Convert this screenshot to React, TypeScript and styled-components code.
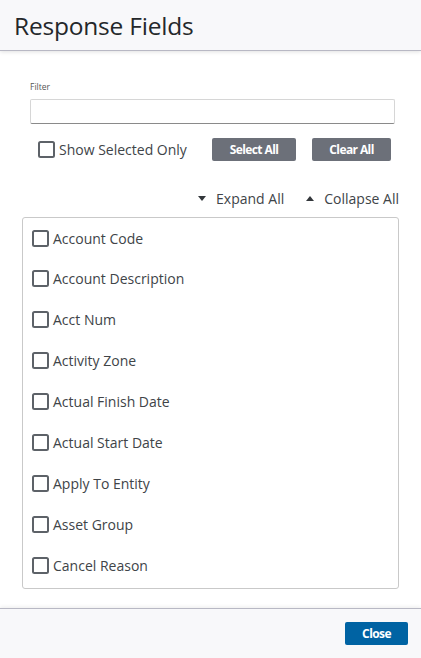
import React, { useState } from "react";
import styled, { createGlobalStyle } from "styled-components";

const GlobalStyle = createGlobalStyle`
  html, body {
    margin: 0;
    padding: 0;
    background: #ffffff;
    font-family: "Open Sans", "Liberation Sans", sans-serif;
    color: #333;
  }
`;

const fields = [
  "Account Code",
  "Account Description",
  "Acct Num",
  "Activity Zone",
  "Actual Finish Date",
  "Actual Start Date",
  "Apply To Entity",
  "Asset Group",
  "Cancel Reason",
];

const Dialog = styled.div`
  width: 421px;
  height: 658px;
  display: flex;
  flex-direction: column;
  overflow: hidden;
`;

const Header = styled.div`
  height: 50px;
  flex: none;
  background: #f8f8fa;
  border-bottom: 1px solid #b8b8c4;
  box-shadow: 0 1px 4px rgba(0, 0, 0, 0.12);
  display: flex;
  align-items: center;
  padding: 0 14px;
  position: relative;
  z-index: 1;

  h1 {
    margin: 0;
    font-size: 24.5px;
    font-weight: 400;
    color: #24272a;
    letter-spacing: -0.2px;
  }
`;

const Body = styled.div`
  flex: 1;
  background: #fff;
  padding: 30px 22px 0 22px;
  display: flex;
  flex-direction: column;
`;

const FilterGroup = styled.div`
  padding: 0 4px 0 8px;
  display: flex;
  flex-direction: column;

  label {
    font-size: 8.5px;
    color: #555;
    line-height: 12px;
    margin-bottom: 6px;
  }

  input {
    height: 25px;
    box-sizing: border-box;
    border: 1px solid #d6d6d6;
    border-bottom: 1px solid #8a8a8a;
    border-radius: 2px;
    outline: none;
    font-family: inherit;
    font-size: 13px;
    padding: 2px 6px;
  }
`;

const ControlRow = styled.div`
  display: flex;
  align-items: center;
  margin-top: 14px;
  padding-left: 16px;
`;

const CheckLabel = styled.label`
  display: flex;
  align-items: center;
  gap: 4px;
  font-size: 14px;
  color: #404448;
  cursor: pointer;
  user-select: none;
`;

const Box = styled.span<{ checked: boolean }>`
  width: 17px;
  height: 17px;
  box-sizing: border-box;
  border: 2px solid #5d6268;
  border-radius: 2.5px;
  background: ${(p) => (p.checked ? "#5d6268" : "#fff")};
  flex: none;
`;

const GreyButton = styled.button<{ width: number }>`
  width: ${(p) => p.width}px;
  height: 23px;
  border: none;
  border-radius: 2px;
  background: #6c7079;
  color: #fff;
  font-family: inherit;
  font-size: 12px;
  font-weight: 700;
  letter-spacing: -0.6px;
  cursor: pointer;
`;

const ShowSelected = styled.div`
  width: 174px;
`;

const ButtonGap = styled.div`
  width: 16px;
`;

const ToggleRow = styled.div`
  display: flex;
  justify-content: flex-end;
  gap: 22px;
  margin-top: 28px;
  font-size: 14px;
  color: #404448;
`;

const Toggle = styled.span`
  display: flex;
  align-items: center;
  gap: 10px;
  cursor: pointer;
`;

const Triangle = styled.span<{ up?: boolean }>`
  width: 0;
  height: 0;
  border-left: 4px solid transparent;
  border-right: 4px solid transparent;
  ${(p) =>
    p.up ? "border-bottom: 5px solid #33373b;" : "border-top: 5px solid #33373b;"}
`;

const ListBox = styled.div`
  margin-top: 9px;
  height: 372px;
  box-sizing: border-box;
  border: 1px solid #c9c9c9;
  border-radius: 3px;
  padding: 10px 0 0 9px;
  display: flex;
  flex-direction: column;
  gap: 20.9px;
  overflow: hidden;
`;

const ListItem = styled(CheckLabel)`
  height: 20px;
`;

const Footer = styled.div`
  height: 49px;
  flex: none;
  background: #f8f8fa;
  border-top: 1px solid #b8b8c4;
  box-shadow: 0 -1px 4px rgba(0, 0, 0, 0.08);
  display: flex;
  align-items: center;
  justify-content: flex-end;
  padding: 0 13px 0 0;
  margin-top: 17px;
`;

const PrimaryButton = styled.button`
  width: 63px;
  height: 23px;
  border: none;
  border-radius: 2px;
  background: #0063a3;
  color: #fff;
  font-family: inherit;
  font-size: 12px;
  font-weight: 700;
  letter-spacing: -0.6px;
  cursor: pointer;
`;

export default function App() {
  const [filter, setFilter] = useState("");
  const [showSelected, setShowSelected] = useState(false);
  const [selected, setSelected] = useState<string[]>([]);

  function toggle(name: string) {
    setSelected((prev) =>
      prev.includes(name) ? prev.filter((n) => n !== name) : [...prev, name]
    );
  }

  return (
    <Dialog>
      <GlobalStyle />
      <Header>
        <h1>Response Fields</h1>
      </Header>
      <Body>
        <FilterGroup>
          <label htmlFor={"filter-input"}>Filter</label>
          <input
            id={"filter-input"}
            value={filter}
            onChange={(e) => setFilter(e.target.value)}
          />
        </FilterGroup>
        <ControlRow>
          <ShowSelected>
            <CheckLabel onClick={() => setShowSelected(!showSelected)}>
              <Box checked={showSelected} />
              Show Selected Only
            </CheckLabel>
          </ShowSelected>
          <GreyButton width={84} onClick={() => setSelected([...fields])}>
            Select All
          </GreyButton>
          <ButtonGap />
          <GreyButton width={79} onClick={() => setSelected([])}>
            Clear All
          </GreyButton>
        </ControlRow>
        <ToggleRow>
          <Toggle>
            <Triangle />
            Expand All
          </Toggle>
          <Toggle>
            <Triangle up />
            Collapse All
          </Toggle>
        </ToggleRow>
        <ListBox>
          {fields
            .filter((f) => f.toLowerCase().includes(filter.toLowerCase()))
            .filter((f) => !showSelected || selected.includes(f))
            .map((f) => (
              <ListItem key={f} onClick={() => toggle(f)}>
                <Box checked={selected.includes(f)} />
                {f}
              </ListItem>
            ))}
        </ListBox>
      </Body>
      <Footer>
        <PrimaryButton>Close</PrimaryButton>
      </Footer>
    </Dialog>
  );
}
